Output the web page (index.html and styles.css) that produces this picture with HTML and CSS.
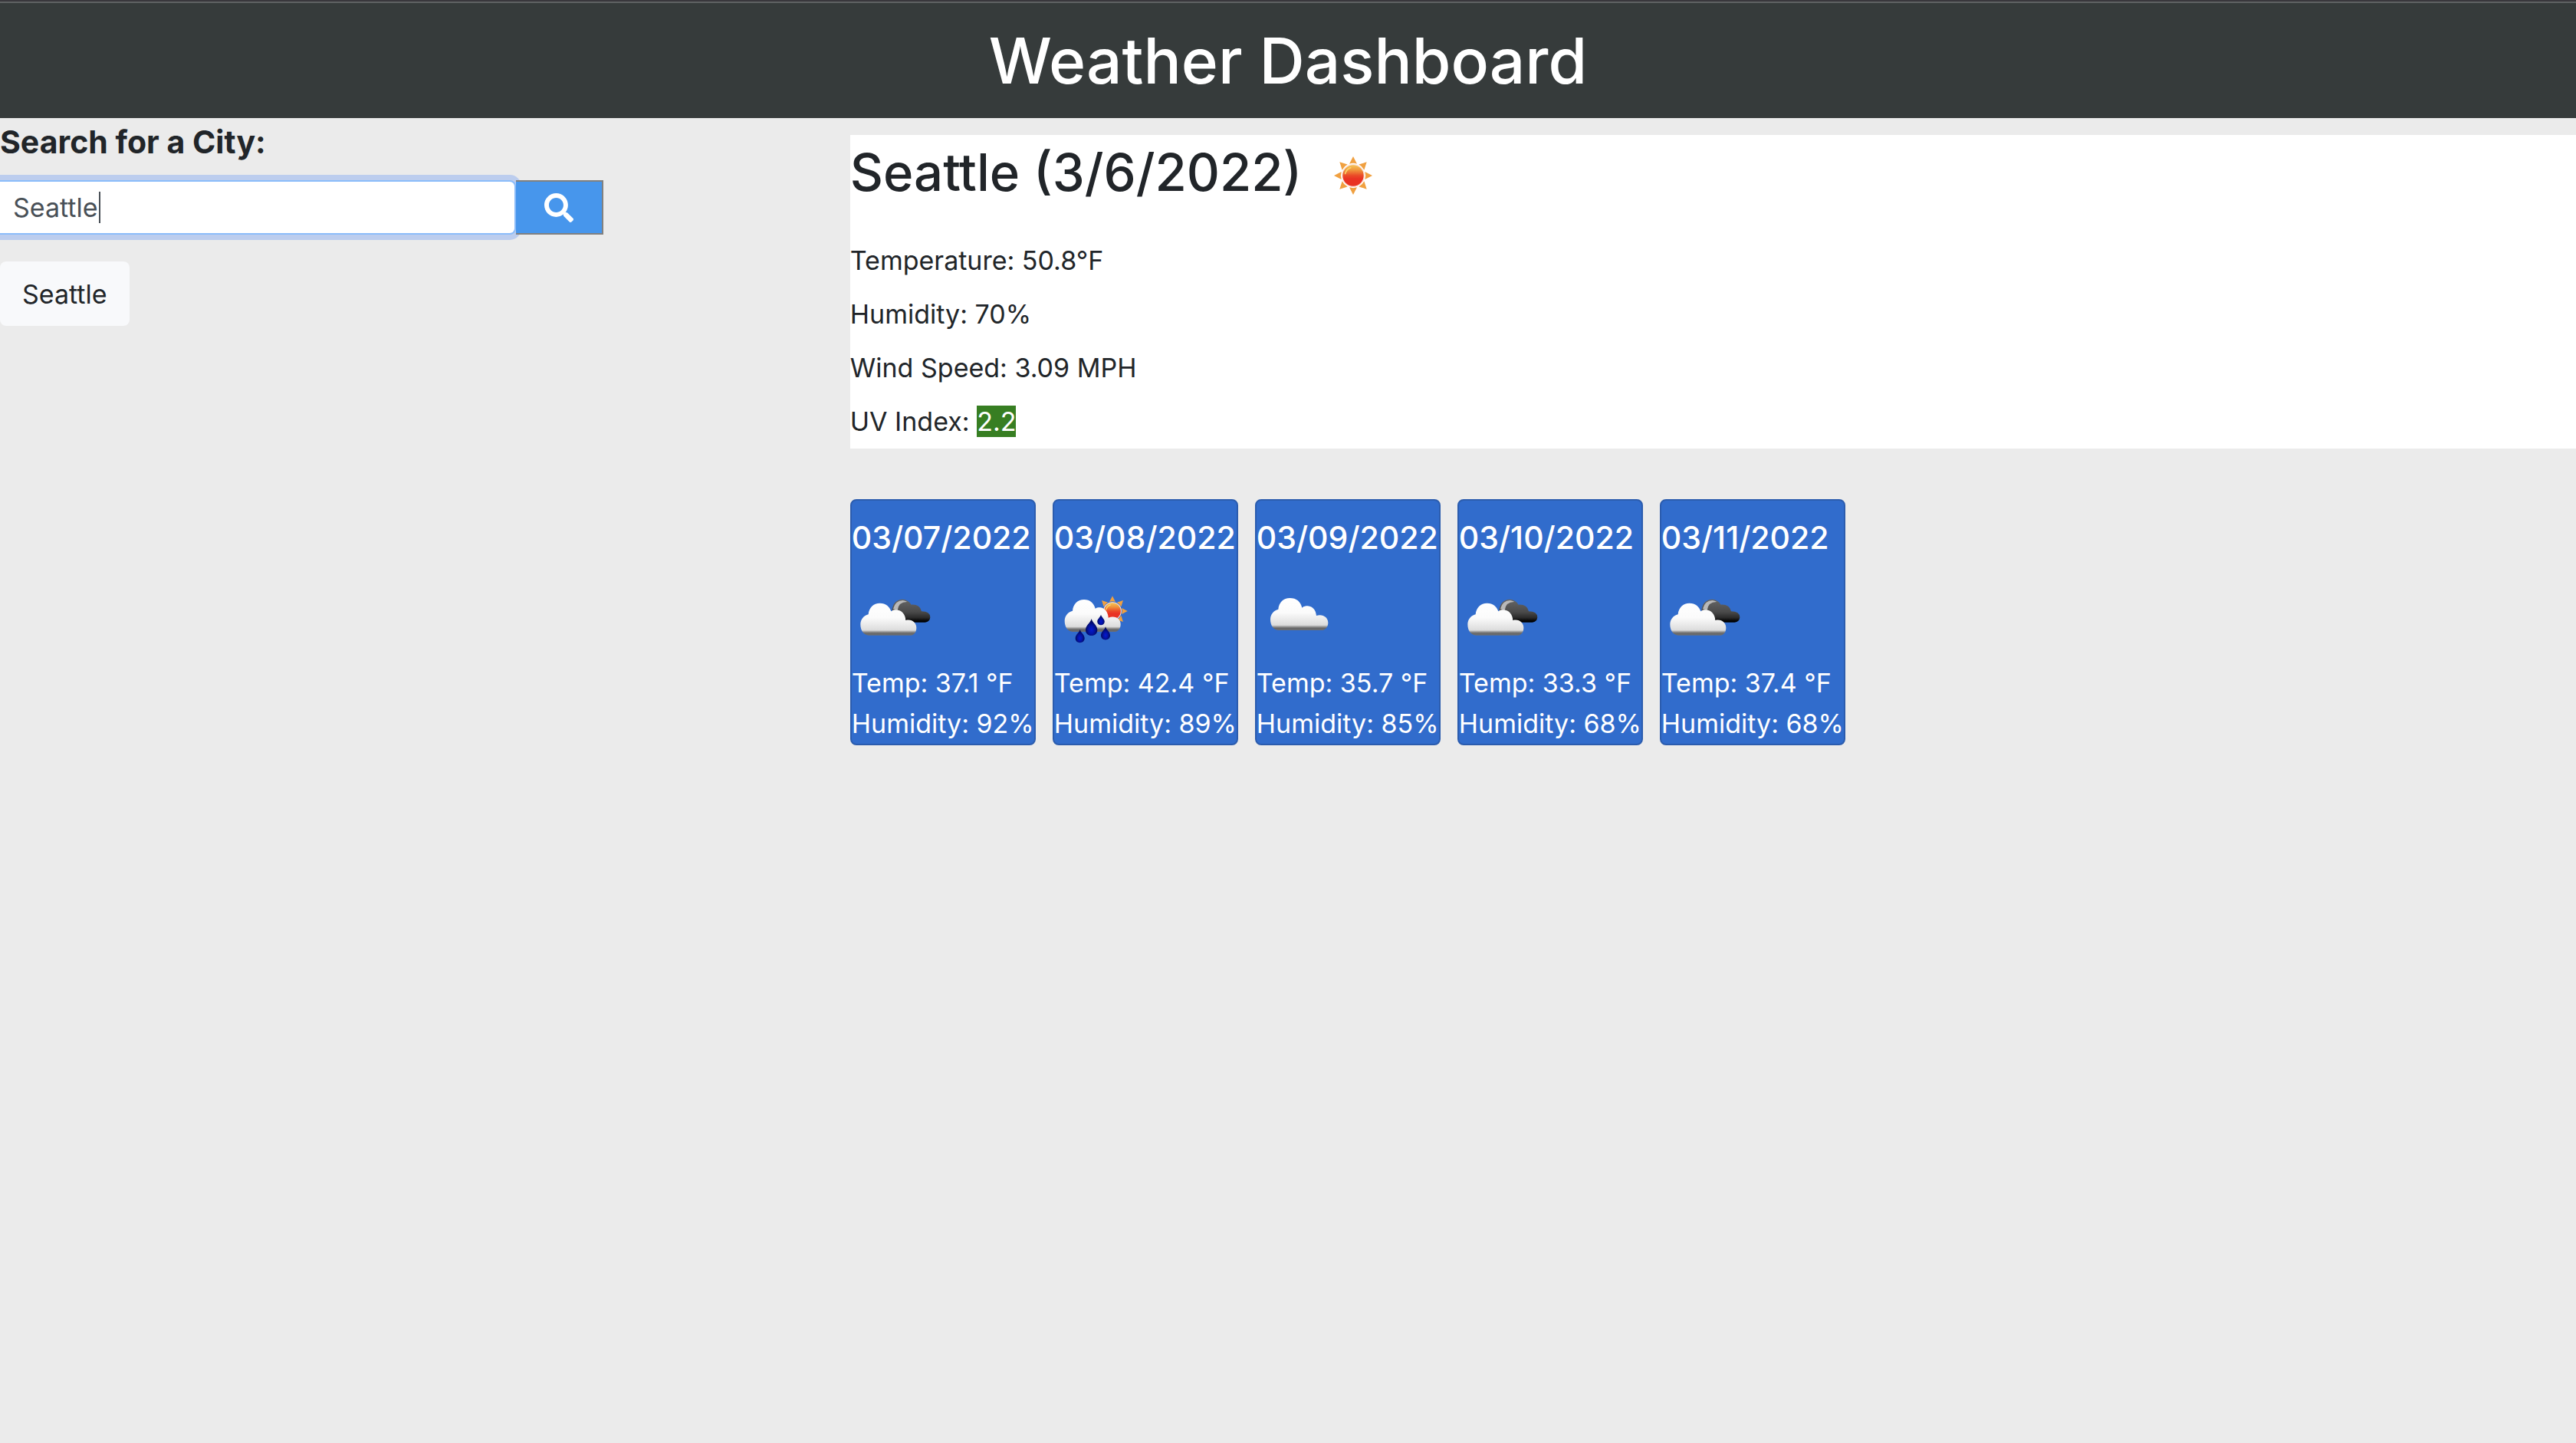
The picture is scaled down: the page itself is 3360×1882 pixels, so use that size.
FILE: index.html
```html
<!DOCTYPE html>
<html lang="en">
<head>
<meta charset="utf-8">
<meta name="viewport" content="width=device-width, initial-scale=1">
<title>Weather Dashboard</title>
<link rel="stylesheet" href="styles.css">
</head>
<body>
<svg class="defs" aria-hidden="true">
  <defs>
    <linearGradient id="cloud-fill" gradientUnits="userSpaceOnUse" x1="0" y1="80" x2="0" y2="206">
      <stop offset="0" stop-color="#fff"/>
      <stop offset=".45" stop-color="#fbfbfb"/>
      <stop offset=".84" stop-color="#dcdcdc"/>
      <stop offset=".9" stop-color="#8a8a8a"/>
      <stop offset=".94" stop-color="#666"/>
      <stop offset="1" stop-color="#6c6f75"/>
    </linearGradient>
    <linearGradient id="dark-fill" gradientUnits="userSpaceOnUse" x1="0" y1="65" x2="0" y2="155">
      <stop offset="0" stop-color="#666"/>
      <stop offset=".55" stop-color="#4a4a4a"/>
      <stop offset=".8" stop-color="#2a2a2a"/>
      <stop offset=".95" stop-color="#000"/>
    </linearGradient>
    <linearGradient id="sun-fill" x1="0" y1="0" x2="0" y2="1">
      <stop offset="0" stop-color="#f6c95a"/>
      <stop offset=".25" stop-color="#f0963c"/>
      <stop offset=".5" stop-color="#ea4a28"/>
      <stop offset=".65" stop-color="#e93323"/>
      <stop offset="1" stop-color="#e93323"/>
    </linearGradient>
    <radialGradient id="drop-fill" cx=".5" cy=".65" r=".5">
      <stop offset="0" stop-color="#0519d0"/>
      <stop offset=".5" stop-color="#0313a4"/>
      <stop offset="1" stop-color="#02095c"/>
    </radialGradient>
    <path id="drop" d="M0-32C4-16 23-6 23 12C23 25 13 34 0 34S-23 25-23 12C-23-6-4-16 0-32Z" fill="url(#drop-fill)"/>
    <g id="sun">
      <g fill="#f0a040">
        <path id="ray" d="M0-75L15-46Q0-51-15-46Z"/>
        <use href="#ray" transform="rotate(45)"/><use href="#ray" transform="rotate(90)"/>
        <use href="#ray" transform="rotate(135)"/><use href="#ray" transform="rotate(180)"/>
        <use href="#ray" transform="rotate(225)"/><use href="#ray" transform="rotate(270)"/>
        <use href="#ray" transform="rotate(315)"/>
      </g>
      <circle r="43" fill="url(#sun-fill)" stroke="#fbe3d8" stroke-width="4"/>
      <path d="M-31-8A33 33 0 0 1-10-31" fill="none" stroke="#f9d66c" stroke-width="5" stroke-linecap="round"/>
    </g>
    <symbol id="broken-clouds" viewBox="3 -42 330 330">
      <path d="M160 108Q166 66 202 65Q224 66 236 86Q270 84 276 112Q310 112 310 136Q308 154 290 155H215Z" fill="url(#dark-fill)"/>
      <path d="M165 102Q173 70 203 69Q213 70 220 75Q186 74 182 108Z" fill="#b9b9b9"/>
      <path d="M68 206C48 203 37 186 37 163C37 144 50 128 68 124C70 98 88 80 113 80C136 80 152 94 157 112C164 107 170 106 177 106C199 108 213 124 214 147C238 141 256 156 256 176C256 192 248 203 236 206Z" fill="url(#cloud-fill)"/>
    </symbol>
    <symbol id="rain" viewBox="9 -42 330 330">
      <use href="#sun" transform="translate(237 111) scale(.79)"/>
      <path transform="translate(13 -14)" d="M68 206C48 203 37 186 37 163C37 144 50 128 68 124C70 98 88 80 113 80C136 80 152 94 157 115C164 111 170 110 177 111C195 113 207 130 208 151C236 141 256 156 256 176C256 192 248 203 236 206Z" fill="url(#cloud-fill)"/>
      <use href="#drop" transform="translate(155 173)"/>
      <use href="#drop" transform="translate(192 145) scale(.62)"/>
      <use href="#drop" transform="translate(110 208) scale(.78)"/>
      <use href="#drop" transform="translate(210 197) scale(.78)"/>
    </symbol>
    <symbol id="cloudy" viewBox="-3 -42 330 330">
      <path transform="translate(14 -20)" d="M68 206C48 203 37 186 37 163C37 144 50 128 68 124C70 98 88 80 113 80C140 80 155 94 161 118C168 112 175 111 183 111C204 113 215 128 217 149C242 141 263 156 263 176C263 192 254 203 242 206Z" fill="url(#cloud-fill)"/>
    </symbol>
    <symbol id="clear" viewBox="30 -12 330 312">
      <use href="#sun" transform="translate(195 147)"/>
    </symbol>
  </defs>
</svg>

<header class="banner">
  <h1>Weather Dashboard</h1>
</header>

<div class="layout">
  <aside class="sidebar">
    <form class="search" onsubmit="return false">
      <label class="search-label" for="city">Search for a City:</label>
      <div class="search-row">
        <div class="search-field">
          <input class="search-input" id="city" type="text" value="Seattle">
          <span class="caret" aria-hidden="true"></span>
        </div>
        <button class="search-button" type="submit" aria-label="Search">
          <svg viewBox="0 0 512 512" aria-hidden="true"><path fill="currentColor" d="M505 442.700L405.300 343c-4.500-4.500-10.600-7-17-7H372c27.600-35.300 44-79.700 44-128C416 93.100 322.900 0 208 0S0 93.100 0 208s93.100 208 208 208c48.300 0 92.700-16.400 128-44v16.300c0 6.400 2.500 12.500 7 17l99.700 99.700c9.400 9.400 24.600 9.400 33.900 0l28.300-28.300c9.400-9.400 9.400-24.600.1-34zM208 336c-70.700 0-128-57.200-128-128 0-70.700 57.200-128 128-128 70.700 0 128 57.200 128 128 0 70.700-57.200 128-128 128z"/></svg>
        </button>
      </div>
    </form>
    <button class="history-button" type="button">Seattle</button>
  </aside>

  <main class="content">
    <section class="current">
      <div class="current-head">
        <h2>Seattle (3/6/2022)</h2>
        <svg class="current-icon" role="img" aria-label="Clear sky"><use href="#clear"/></svg>
      </div>
      <p>Temperature: 50.8°F</p>
      <p>Humidity: 70%</p>
      <p>Wind Speed: 3.09 MPH</p>
      <p>UV Index: <span class="uv">2.2</span></p>
    </section>

    <section class="forecast">
      <article class="day">
        <h3>03/07/2022</h3>
        <svg class="day-icon" role="img" aria-label="Broken clouds"><use href="#broken-clouds"/></svg>
        <p>Temp: 37.1 °F</p>
        <p>Humidity: 92%</p>
      </article>
      <article class="day">
        <h3>03/08/2022</h3>
        <svg class="day-icon" role="img" aria-label="Rain"><use href="#rain"/></svg>
        <p>Temp: 42.4 °F</p>
        <p>Humidity: 89%</p>
      </article>
      <article class="day">
        <h3>03/09/2022</h3>
        <svg class="day-icon" role="img" aria-label="Cloudy"><use href="#cloudy"/></svg>
        <p>Temp: 35.7 °F</p>
        <p>Humidity: 85%</p>
      </article>
      <article class="day">
        <h3>03/10/2022</h3>
        <svg class="day-icon" role="img" aria-label="Broken clouds"><use href="#broken-clouds"/></svg>
        <p>Temp: 33.3 °F</p>
        <p>Humidity: 68%</p>
      </article>
      <article class="day">
        <h3>03/11/2022</h3>
        <svg class="day-icon" role="img" aria-label="Broken clouds"><use href="#broken-clouds"/></svg>
        <p>Temp: 37.4 °F</p>
        <p>Humidity: 68%</p>
      </article>
    </section>
  </main>
</div>
</body>
</html>
```
FILE: styles.css
```css
* {
  box-sizing: border-box;
}

body {
  margin: 0;
  background: #ebebeb;
  color: #212529;
  font-family: Inter, Roboto, "Liberation Sans", sans-serif;
  font-size: 34px;
  line-height: 53px;
}

h1, h2, h3, p {
  margin: 0;
  font-weight: 500;
}

p {
  font-weight: 400;
}

.defs {
  position: absolute;
  width: 0;
  height: 0;
}

.banner {
  padding: 24px 0 20px;
  border-top: 2px solid #39373c;
  background: #363b3b;
  box-shadow: inset 0 2px #5f6163;
  color: #fff;
  text-align: center;
}

.banner h1 {
  font-size: 82px;
  line-height: 108px;
}

.layout {
  display: grid;
  grid-template-columns: 33% 67%;
}

/* Search column */
.sidebar {
  padding-top: 5px;
}

.search-label {
  display: block;
  margin-bottom: 23px;
  font-size: 41px;
  font-weight: 700;
}

.search-row {
  display: flex;
  width: 71%;
}

.search-field {
  position: relative;
  flex: 1;
}

.search-input {
  display: block;
  width: 100%;
  height: 71px;
  padding: 0 17px;
  border: 2px solid #8bbcfa;
  border-left: 0;
  border-radius: 0 8px 8px 0;
  outline: 0;
  background: #fff;
  box-shadow: 0 0 0 7px #bccdee;
  color: #495057;
  font: inherit;
}

.caret {
  position: absolute;
  top: 15px;
  left: 129px;
  width: 2px;
  height: 41px;
  background: #495057;
}

.search-button {
  position: relative;
  display: flex;
  align-items: center;
  justify-content: center;
  width: 114px;
  padding: 0;
  border: 2px solid #808080;
  border-left: 0;
  background: #4796ec;
  color: #fff;
}

.search-button svg {
  width: 38px;
  height: 38px;
}

.history-button {
  margin-top: 35px;
  height: 84px;
  padding: 0 29px;
  border: 0;
  border-radius: 8px;
  background: #f8f9fb;
  color: #212529;
  font: inherit;
}

/* Current conditions */
.content {
  padding-top: 22px;
}

.current {
  padding-bottom: 9px;
  background: #fff;
}

.current-head {
  display: flex;
  align-items: flex-start;
  gap: 12px;
  margin-bottom: 33px;
}

.current-head h2 {
  font-size: 67px;
  line-height: 98px;
}

.current-icon {
  width: 110px;
  height: 104px;
}

.current p + p {
  margin-top: 17px;
}

.uv {
  background: #377e22;
  color: #fff;
}

/* Five-day forecast */
.forecast {
  display: flex;
  flex-wrap: wrap;
  gap: 22px;
  margin-top: 66px;
}

.day {
  width: 242px;
  padding-top: 22px;
  border: 2px solid #2b5cae;
  border-radius: 8px;
  background: #316ccc;
  color: #fff;
  white-space: nowrap;
}

.day h3 {
  font-size: 41px;
  line-height: 53px;
}

.day-icon {
  display: block;
  width: 110px;
  height: 110px;
  margin: 18px 0 8px;
}
```
